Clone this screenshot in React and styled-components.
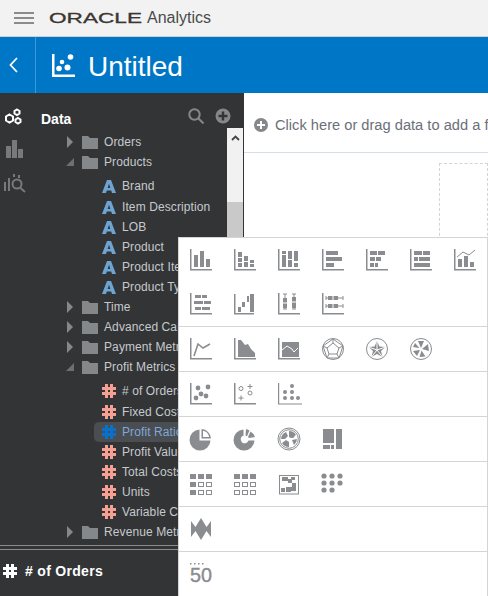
import React from "react"
import styled, { createGlobalStyle } from "styled-components"

const Global = createGlobalStyle`
  html, body { margin: 0; padding: 0; background: #fff; }
  body { font-family: "Liberation Sans", Arial, sans-serif; }
`

const Page = styled.div`
  position: relative;
  display: flex;
  flex-direction: column;
  width: 488px;
  height: 596px;
  overflow: hidden;
`

const TopBar = styled.header`
  display: flex;
  align-items: center;
  flex: none;
  height: 36px;
  padding-left: 14px;
  background: #f2f2f2;
  border-bottom: 1px solid #cfcfcf;
`

const Burger = styled.div`
  display: flex;
  flex-direction: column;
  gap: 3px;
  width: 20px;
  margin-right: 15px;
  & > span {
    height: 2px;
    background: #8b8b8b;
  }
`

const Wordmark = styled.span`
  display: inline-block;
  width: 93px;
  font-size: 14.500px;
  color: #3a3632;
  -webkit-text-stroke: 0.3px #3a3632;
  transform: scaleX(1.560);
  transform-origin: left center;
  white-space: nowrap;
`

const Product = styled.span`
  margin-left: 5px;
  font-size: 16px;
  color: #4a4a4a;
`

const TitleBar = styled.div`
  display: flex;
  align-items: center;
  flex: none;
  height: 56px;
  background: #0076c6;
  color: #fff;
`

const BackButton = styled.div`
  display: flex;
  align-items: center;
  justify-content: center;
  align-self: stretch;
  width: 27px;
  padding-right: 8px;
  border-right: 1px solid #3f97d6;
`

const TitleIcon = styled.svg`
  margin-left: 16px;
  fill: #fff;
`

const Title = styled.h1`
  margin: 3px 0 0 13px;
  font-size: 28px;
  font-weight: 400;
  line-height: 1;
`

const Body = styled.div`
  display: flex;
  flex: 1;
  min-height: 0;
`

const Sidebar = styled.aside`
  display: flex;
  flex-direction: column;
  flex: none;
  width: 244px;
  background: #333436;
`

const SideTop = styled.div`
  display: flex;
  flex: none;
  height: 448px;
`

const Rail = styled.nav`
  display: flex;
  flex-direction: column;
  align-items: flex-start;
  flex: none;
  width: 32px;
  padding: 15px 0 0 4px;
  box-sizing: border-box;
  gap: 15px;
`

const Panel = styled.div`
  display: flex;
  flex-direction: column;
  flex: 1;
  min-width: 0;
`

const PanelHead = styled.div`
  display: flex;
  align-items: center;
  flex: none;
  height: 35px;
  padding: 0 13px 0 9px;
  gap: 11px;
  color: #fff;
  font-size: 14px;
  font-weight: 700;
`

const PanelName = styled.span`
  flex: 1;
  padding-top: 16px;
`

const HeadIcon = styled.svg`
  width: 16px;
  height: 16px;
  margin-top: 10px;
  fill: none;
`

const TreeWrap = styled.div`
  display: flex;
  flex: 1;
  min-height: 0;
`

const Tree = styled.div`
  flex: 1;
  min-width: 0;
  padding-top: 4px;
  overflow: hidden;
`

const Group = styled.div`
  padding-top: 4px;
  & > div:first-child {
    height: 19px;
    padding-bottom: 2px;
  }
`

const Row = styled.div`
  display: flex;
  align-items: center;
  height: 20px;
  padding-left: ${(p) => (p.$selected ? 8 : p.$leaf ? 70 : 34)}px;
  margin-left: ${(p) => (p.$selected ? 62 : 0)}px;
  font-size: 12px;
  letter-spacing: 0.1px;
  white-space: nowrap;
  color: ${(p) => (p.$selected ? "#7fa9d6" : "#c6cacd")};
  background: ${(p) => (p.$selected ? "#4a4d52" : "transparent")};
  border-radius: 5px 0 0 5px;
`

const Caret = styled.svg`
  flex: none;
  width: 8px;
  height: 12px;
  margin-right: 8px;
`

const FolderGlyph = styled.svg`
  flex: none;
  width: 16px;
  height: 13px;
  margin-right: 6px;
`

const LeafIcon = styled.svg`
  flex: none;
  width: 14px;
  height: 14px;
  margin-right: 6px;
`

const Scrollbar = styled.div`
  display: flex;
  flex-direction: column;
  flex: none;
  width: 16px;
  margin-right: 1px;
  background: #f1f1f1;
`

const ScrollUp = styled.div`
  display: flex;
  justify-content: center;
  flex: none;
  height: 74px;
  padding-top: 7px;
  box-sizing: border-box;
`

const Thumb = styled.div`
  flex: 1;
  background: #c9c9c9;
`

const Footer = styled.div`
  flex: 1;
  padding-top: 4px;
`

const Rule = styled.div`
  height: 1px;
  margin-bottom: 3px;
  background: #8a8a8a;
`

const Picked = styled.div`
  display: flex;
  align-items: center;
  height: 36px;
  padding-left: 3px;
  box-sizing: border-box;
  color: #fff;
  font-size: 14px;
  font-weight: 700;
  letter-spacing: 0.3px;
  & > svg {
    margin-right: 8px;
  }
`

const PickedBar = styled.div`
  width: 23px;
  height: 2px;
  margin: 8px 0 0 7px;
  background: #0076c6;
`

const Canvas = styled.main`
  flex: 1;
  min-width: 0;
  background: #fff;
`

const FilterBar = styled.div`
  display: flex;
  align-items: center;
  height: 60px;
  box-sizing: border-box;
  padding: 4px 0 0 10px;
  gap: 7px;
  border-bottom: 1px solid #d6dfe8;
  color: #6b6f78;
  font-size: 14.670px;
  white-space: nowrap;
  overflow: hidden;
`

const Drop = styled.div`
  height: 500px;
  margin: 10px 0 0 195px;
  border: 1px dashed #d4d4d4;
`

const Popup = styled.div`
  position: absolute;
  left: 178px;
  top: 237px;
  width: 310px;
  height: 359px;
  box-sizing: border-box;
  background: #fff;
  border: 1px solid #d4d4d4;
  border-bottom: 0;
`

const Section = styled.div`
  display: grid;
  grid-template-columns: repeat(7, 22px);
  gap: 22px;
  padding: 11px;
  border-bottom: 1px solid #d4d4d4;
  &:last-child {
    border-bottom: 0;
  }
`

const Chart = styled.svg`
  display: block;
  width: 22px;
  height: 22px;
  fill: #8a8c8f;
  stroke: none;
  overflow: visible;
  .line {
    fill: none;
    stroke: #8a8c8f;
    stroke-width: 1;
  }
  .thick {
    fill: none;
    stroke: #8a8c8f;
    stroke-width: 1.6;
  }
  .white {
    fill: none;
    stroke: #fff;
    stroke-width: 1;
  }
  text {
    font-family: "Liberation Sans", Arial, sans-serif;
    font-size: 21px;
    stroke: #8a8c8f;
    stroke-width: 0.4;
  }
`

const Axis = () => <path d="M0 0h1.5v20H22v1.6H0z" />

const Blocks = ({ list }) =>
  list.map(([x, y, w, h], i) => <rect key={i} x={x} y={y} width={w} height={h} />)

const Dots = ({ list, r = 2 }) =>
  list.map(([x, y], i) => <circle key={i} cx={x} cy={y} r={r} />)

// hollow cells for the two table icons
const Cells = ({ list }) =>
  list.map(([x, y], i) => <rect key={i} className="line" x={x + 0.5} y={y + 0.5} width="5" height="4" />)

const sections = [
  [
    <><Axis /><Blocks list={[[4, 6, 4, 12], [10, 2, 4, 16], [16, 10, 4, 8]]} /></>,
    <><Axis /><Blocks list={[[4, 3, 4, 5], [4, 9, 4, 4], [4, 14, 4, 4], [10, 7, 4, 5], [10, 13, 4, 5], [16, 11, 4, 3], [16, 15, 4, 3]]} /></>,
    <><Axis /><Blocks list={[[4, 2, 4, 3], [4, 6, 4, 12], [10, 2, 4, 8], [10, 11, 4, 7], [16, 2, 4, 10], [16, 14, 4, 4]]} /></>,
    <><Axis /><Blocks list={[[4, 2, 12, 4], [4, 8, 16, 4], [4, 14, 8, 4]]} /></>,
    <><Axis /><Blocks list={[[4, 2, 7, 4], [12, 2, 7, 4], [4, 8, 5, 4], [10, 8, 5, 4], [4, 14, 4, 4], [9, 14, 3, 4]]} /></>,
    <><Axis /><Blocks list={[[4, 2, 8, 4], [13, 2, 7, 4], [4, 8, 4, 4], [9, 8, 11, 4], [4, 14, 16, 4]]} /></>,
    <><Axis /><Blocks list={[[4, 10, 4, 8], [10, 7, 4, 11], [16, 13, 4, 5]]} /><path className="line" d="M3 8l6-5 6 3 6-5" /></>,
    <><Axis /><Blocks list={[[5, 2, 6, 3], [12, 2, 5, 3], [4, 8, 9, 3], [14, 8, 7, 3], [5, 14, 6, 3], [12, 14, 8, 3]]} /></>,
    <><path d="M0 1h1.5v19H20v1.6H0z" /><Blocks list={[[4, 14, 3, 5], [8, 9, 3, 5], [13, 3, 2, 6], [16, 1, 4, 18]]} /></>,
    <><Axis /><Blocks list={[[5, 5, 4, 10], [14, 4, 4, 11]]} /><path className="line" d="M5 1h4M7 1v15M5 16h4M14 1h4M16 1v15M14 16h4" /><path className="white" d="M5 10h4M14 9h4" /></>,
    <><Axis /><Blocks list={[[6, 3, 10, 4], [6, 11, 10, 4]]} /><path className="line" d="M4 5h17M4 3v4M21 3v4M4 13h17M4 11v4M21 11v4" /><path className="white" d="M11 3v4M11 11v4" /></>,
  ],
  [
    <><Axis /><path className="thick" d="M4 18L8 6l5 4 7-4" /></>,
    <><Axis /><path d="M4 19V2h3l4 5 3-1 3 5 4 4v4z" /></>,
    <><Axis /><path d="M4 19V4h17v15z" /><path className="white" d="M4 12l5-4 5 3 2 3 4-4" /></>,
    <><circle className="line" cx="11" cy="11" r="10.5" /><path className="line" d="M11 1l10 7-4 12H5L1 8zM11 5l6 5-2 6H7l-2-6zM11 1v4M21 8l-4 2M17 20l-2-4M5 20l2-4M1 8l4 2" /></>,
    <><circle className="line" cx="11" cy="11" r="10.5" /><path d="M11 3l2.5 5.5 6 .5-4.5 4 1.5 6-5.5-3-5.5 3 1.5-6-4.500-4 6-.5z" /><path className="white" d="M11 3v9M19.500 9L11 12M16.500 19L11 12M5.500 19L11 12M2.500 9L11 12" /></>,
    <><circle className="line" cx="11" cy="11" r="10.5" /><path d="M11 10L8 3h6zM12 11l6-5 1 7zM11.500 12.500l4 6-6 .5zM10 12l-3 6-4-5zM9.500 10L3 9l2-4z" /></>,
  ],
  [
    <><Axis /><Dots list={[[8, 5], [18, 4], [11, 11], [16, 13], [6, 15]]} r={2.4} /></>,
    <><Axis /><circle className="line" cx="7" cy="5.500" r="2" /><circle className="line" cx="16" cy="10" r="2" /><path className="line" d="M13.500 3.500h5M16 1v5M4.500 15h5M7 12.500v5" /></>,
    <><path d="M0 0h1.200v20.600H24v1H0z" /><Dots list={[[14, 3], [7, 9], [14, 9], [7, 15], [14, 15], [20, 15]]} /></>,
  ],
  [
    <path d="M9.500 1.500v11h11A10.500 10.500 0 1 1 9.500 1.500zM11.500 1a10 10 0 0 1 9.500 9.500h-9.500zM13 2.800v6.200h6.200a8 8 0 0 0-6.200-6.200z" fillRule="evenodd" />,
    <path d="M9.500 1.500v6a4 4 0 1 0 5 5h6A10.500 10.500 0 1 1 9.500 1.500zM12 1l-.5 6.500 1.500.7L15.500 2.500zM16.500 3.500L14 9l1 1 6-1a10 10 0 0 0-4.500-5.500z" />,
    <><circle className="line" cx="11" cy="11" r="11" /><circle className="line" cx="11" cy="11" r="9.300" /><path d="M11 3a8 8 0 0 1 7 4l-5 3-2-1zM3 11a8 8 0 0 1 5-7l2 4-3 3zM8 12l3 2v5a8 8 0 0 1-7-4zM14 12l5-1a8 8 0 0 1-3 6z" /><circle cx="14.500" cy="8" r="2" /></>,
    <Blocks list={[[1, 1, 11, 14], [14, 1, 6, 20], [1, 17, 7, 4], [9, 17, 3, 4]]} />,
  ],
  [
    <><Blocks list={[[0, 1, 6, 5], [8, 1, 6, 5], [16, 1, 6, 5], [0, 9, 6, 5], [0, 17, 6, 5]]} /><Cells list={[[8, 9], [16, 9], [8, 17], [16, 17]]} /></>,
    <><Blocks list={[[0, 1, 6, 5], [8, 1, 6, 5], [16, 1, 6, 5]]} /><Cells list={[[0, 9], [8, 9], [16, 9], [0, 17], [8, 17], [16, 17]]} /></>,
    <><path d="M1 2h20v19.500H1zM2 3v17.500h18V3z" fillRule="evenodd" /><Blocks list={[[4, 4, 6, 4], [10, 6, 4, 4], [13, 4, 4, 3], [14, 10, 4, 4], [8, 14, 5, 5], [13, 14, 5, 4], [3, 15, 4, 4]]} /></>,
    <Dots list={[[2, 3], [10, 3], [18, 3], [2, 10], [10, 10], [18, 10], [2, 17], [10, 17]]} r={2.6} />,
  ],
  [<path d="M1 3l4.500 6L11 0l5.500 9L21 3v16l-4.500-6L11 22l-5.500-9L1 19z" />],
  [
    <><Blocks list={[[0, 0, 1.500, 1.500], [4, 0, 1.500, 1.500], [8, 0, 1.500, 1.500], [12, 0, 1.500, 1.500]]} /><text x="0" y="19" textLength="22" lengthAdjust="spacingAndGlyphs">50</text></>,
  ],
]

const CaretIcon = ({ open }) => (
  <Caret viewBox="0 0 8 12">
    {open ? <path d="M0 10L8 2v8z" fill="#6d6f72" /> : <path d="M1 0l6 6-6 6z" fill="#85888b" />}
  </Caret>
)

const FolderIcon = () => (
  <FolderGlyph viewBox="0 0 16 13">
    <path d="M0 0h6l2 2h8v11H0z" fill="#85888b" />
  </FolderGlyph>
)

const AttrIcon = () => (
  <LeafIcon viewBox="0 0 14 14">
    <path d="M5 1h4l5 13h-4l-.8-2.500H4.800L4 14H0zM7 4.800L5.700 9h2.600z" fillRule="evenodd" fill="#6ea4d2" />
  </LeafIcon>
)

const HashIcon = ({ color }) => (
  <LeafIcon viewBox="0 0 14 14">
    <path
      d="M3 0h3v3h2V0h3v3h3v3h-3v2h3v3h-3v3H8v-3H6v3H3v-3H0V8h3V6H0V3h3zM6 6v2h2V6z"
      fillRule="evenodd"
      fill={color}
    />
  </LeafIcon>
)

const FolderRow = ({ name, open }) => (
  <Row>
    <CaretIcon open={open} />
    <FolderIcon />
    {name}
  </Row>
)

const Leaf = ({ name, measure, selected }) => (
  <Row $leaf $selected={selected}>
    {measure ? <HashIcon color={selected ? "#0572ce" : "#f4a092"} /> : <AttrIcon />}
    {name}
  </Row>
)

const attributes = ["Brand", "Item Description", "LOB", "Product", "Product Item", "Product Type"]
const measures = ["# of Orders", "Fixed Costs", "Profit Ratio", "Profit Value", "Total Costs", "Units", "Variable Costs"]

const App = () => {
  return (
    <Page>
      <Global />
      <TopBar>
        <Burger>
          <span />
          <span />
          <span />
        </Burger>
        <Wordmark>ORACLE</Wordmark>
        <Product>Analytics</Product>
      </TopBar>
      <TitleBar>
        <BackButton>
          <svg width="9" height="16" viewBox="0 0 9 16" fill="none" stroke="#fff" strokeWidth="1.8">
            <path d="M8 1L1.500 8 8 15" />
          </svg>
        </BackButton>
        <TitleIcon width="23" height="23" viewBox="0 0 23 23">
          <path d="M0 0h2.500v20.500H23V23H0z" />
          <circle cx="7" cy="14.500" r="2.800" />
          <circle cx="15.500" cy="13.500" r="3" />
          <circle cx="10" cy="8" r="2.300" />
          <circle cx="18.500" cy="3" r="2.800" />
        </TitleIcon>
        <Title>Untitled</Title>
      </TitleBar>
      <Body>
        <Sidebar>
          <SideTop>
            <Rail>
              <svg width="18" height="17" viewBox="0 0 18 17" fill="none" stroke="#fff" strokeWidth="2">
                <path d="M5.500 6.500l3.500 2v4l-3.500 2-3.500-2v-4z" />
                <path d="M13 1.500l2.500 1.500v2.500L13 7l-2.500-1.500V3z" />
                <path d="M14 10l2.500 1.500V14L14 15.500 11.500 14v-2.500z" />
              </svg>
              <svg width="20" height="18" viewBox="0 0 20 18" fill="#77797c">
                <path d="M2 6h5v12H2zM8 0h5v18H8zM14 9h5v9h-5z" />
              </svg>
              <svg width="22" height="20" viewBox="0 0 22 20" fill="none" stroke="#77797c">
                <path d="M0 9h2v9H0zM4 5h2v13H4z" fill="#77797c" stroke="none" />
                <circle cx="13" cy="11" r="4.500" strokeWidth="2" />
                <path d="M16.500 15l4.500 4" strokeWidth="2" />
                <path d="M9 1h2v3H9zM14 2h2v3h-2z" fill="#77797c" stroke="none" />
              </svg>
            </Rail>
            <Panel>
              <PanelHead>
                <PanelName>Data</PanelName>
                <HeadIcon viewBox="0 0 16 16" stroke="#85888b" strokeWidth="2">
                  <circle cx="6.500" cy="6.500" r="5.200" />
                  <path d="M10.500 10.500L15.500 15.500" />
                </HeadIcon>
                <HeadIcon viewBox="0 0 16 16">
                  <circle cx="8" cy="8" r="7.500" fill="#85888b" />
                  <path d="M8 3.500v9M3.500 8h9" stroke="#333436" strokeWidth="2.400" />
                </HeadIcon>
              </PanelHead>
              <TreeWrap>
                <Tree>
                  <FolderRow name="Orders" />
                  <FolderRow name="Products" open />
                  <Group>
                    {attributes.map((name) => (
                      <Leaf key={name} name={name} />
                    ))}
                  </Group>
                  <FolderRow name="Time" />
                  <FolderRow name="Advanced Calculations" />
                  <FolderRow name="Payment Metrics" />
                  <FolderRow name="Profit Metrics" open />
                  <Group>
                    {measures.map((name) => (
                      <Leaf key={name} name={name} measure selected={name === "Profit Ratio"} />
                    ))}
                  </Group>
                  <FolderRow name="Revenue Metrics" />
                </Tree>
                <Scrollbar>
                  <ScrollUp>
                    <svg width="9" height="6" viewBox="0 0 9 6" fill="none" stroke="#444" strokeWidth="1.800">
                      <path d="M1 5l3.500-3.500L8 5" />
                    </svg>
                  </ScrollUp>
                  <Thumb />
                </Scrollbar>
              </TreeWrap>
            </Panel>
          </SideTop>
          <Footer>
            <Rule />
            <Rule />
            <Picked>
              <HashIcon color="#fff" />
              # of Orders
            </Picked>
            <PickedBar />
          </Footer>
        </Sidebar>
        <Canvas>
          <FilterBar>
            <svg width="14" height="14" viewBox="0 0 14 14" style={{ flex: "none" }}>
              <circle cx="7" cy="7" r="7" fill="#85888b" />
              <path d="M7 3v8M3 7h8" stroke="#fff" strokeWidth="2" />
            </svg>
            Click here or drag data to add a filter
          </FilterBar>
          <Drop />
        </Canvas>
      </Body>
      <Popup>
        {sections.map((icons, i) => (
          <Section key={i}>
            {icons.map((icon, j) => (
              <Chart key={j} viewBox="0 0 22 22">
                {icon}
              </Chart>
            ))}
          </Section>
        ))}
      </Popup>
    </Page>
  )
}

export default App
